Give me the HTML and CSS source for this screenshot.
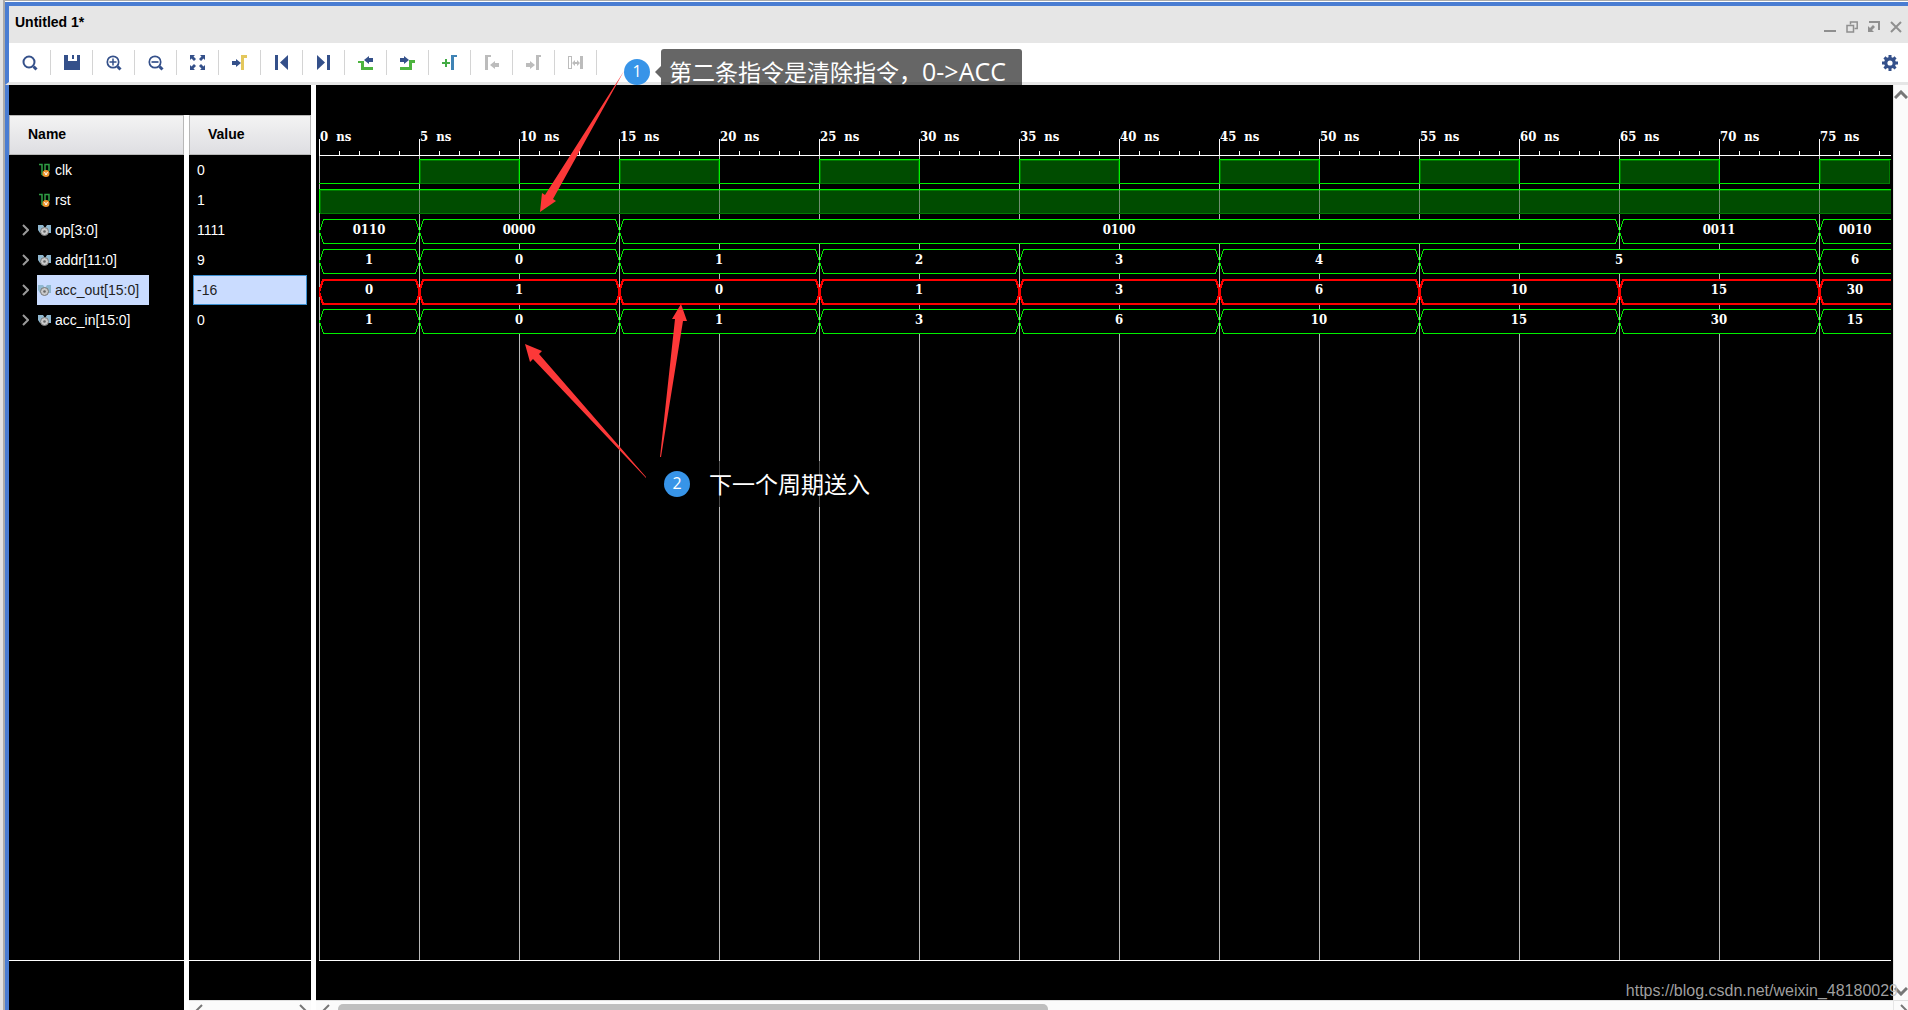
FILE: index.html
```html
<!DOCTYPE html>
<html lang="zh-CN">
<head>
<meta charset="utf-8">
<title>Untitled 1*</title>
<link rel="stylesheet" href="styles.css">
</head>
<body>
<div class="window">
  <header class="titlebar">
    <h1 class="title">Untitled 1*</h1>
    <div class="window-controls">
      <button type="button" class="ctl" aria-label="Minimize"><svg width="12" height="12"><path d="M0 9h12v2H0z" fill="#8f8f8f"/></svg></button>
      <button type="button" class="ctl" aria-label="Restore"><svg width="12" height="12" fill="none" stroke="#8f8f8f" stroke-width="1.5"><path d="M4.5 3.5V1h6.7v6.5H8.5"/><path d="M1 4.5h6.500v6.500H1z"/></svg></button>
      <button type="button" class="ctl" aria-label="Float"><svg width="12" height="12"><path d="M1 0h11v9h-2V2H1z" fill="#8f8f8f"/><path d="M0 11V5l2 2 3-3 2 2-3 3 2 2z" fill="#8f8f8f"/></svg></button>
      <button type="button" class="ctl" aria-label="Close"><svg width="12" height="12" stroke="#8f8f8f" stroke-width="2"><path d="M1 1l10 10M11 1L1 11"/></svg></button>
    </div>
  </header>

  <div class="toolbar" role="toolbar" aria-label="Waveform">
    <button type="button" class="tool" aria-label="Find"><svg width="16" height="16" fill="none" stroke="#34508a"><circle cx="7" cy="7" r="5.500" stroke-width="2"/><path d="M11.500 11.500l3 3" stroke-width="3"/></svg></button>
    <button type="button" class="tool" aria-label="Save"><svg width="16" height="16"><path d="M0 0h4v6h9V0h3v15H0z" fill="#34508a"/><path d="M8 0h2v4H8z" fill="#34508a"/></svg></button>
    <button type="button" class="tool" aria-label="Zoom in"><svg width="16" height="16" fill="none" stroke="#34508a"><circle cx="7" cy="7" r="5.700" stroke-width="1.700"/><path d="M11.500 11.500l3 3" stroke-width="3"/><path d="M3.500 7h7M7 3.500v7" stroke-width="1.500"/></svg></button>
    <button type="button" class="tool" aria-label="Zoom out"><svg width="16" height="16" fill="none" stroke="#34508a"><circle cx="7" cy="7" r="5.700" stroke-width="1.700"/><path d="M11.500 11.500l3 3" stroke-width="3"/><path d="M3.500 7h7" stroke-width="1.700"/></svg></button>
    <button type="button" class="tool" aria-label="Zoom fit"><svg width="16" height="16" fill="#34508a"><path d="M0 0h5L3.500 1.500 6 4 4 6 1.500 3.500 0 5zM15 0v5l-1.500-1.500L11 6 9 4l2.500-2.500L10 0zM0 15v-5l1.500 1.500L4 9l2 2-2.500 2.500L5 15zM15 15h-5l1.500-1.500L9 11l2-2 2.500 2.500L15 10z"/></svg></button>
    <button type="button" class="tool" aria-label="Go to cursor"><svg width="16" height="16"><path d="M0 6h4V4l5 4-5 4v-2H0z" fill="#34508a"/><path d="M9 0h6v3h-3v12H9z" fill="#e3c75c"/></svg></button>
    <button type="button" class="tool" aria-label="Go to start"><svg width="16" height="16" fill="#34508a"><path d="M1 0h3v15H1zM14 0v15L6 7.500z"/></svg></button>
    <button type="button" class="tool" aria-label="Go to end"><svg width="16" height="16" fill="#34508a"><path d="M1 0v15l8-7.500zM11 0h3v15h-3z"/></svg></button>
    <button type="button" class="tool" aria-label="Previous transition"><svg width="16" height="16"><path d="M0 6h6v6h9v3H3V8H0z" fill="#4db43f"/><path d="M6 5l5-4v2h4v4h-4v2z" fill="#34508a"/></svg></button>
    <button type="button" class="tool" aria-label="Next transition"><svg width="16" height="16"><path d="M0 12h9V5h6v3h-3v7H0z" fill="#4db43f"/><path d="M0 3h4V1l5 4-5 4V7H0z" fill="#34508a"/></svg></button>
    <button type="button" class="tool" aria-label="Add marker"><svg width="16" height="16"><path d="M3 4h2v3h3v2H5v3H3V9H0V7h3z" fill="#43ab45"/><path d="M9 0h6v2h-3v13H9z" fill="#3f83b5"/></svg></button>
    <button type="button" class="tool" aria-label="Previous marker" disabled><svg width="16" height="16" fill="#bcbcbc"><path d="M1 0h6v2H4v13H1zM6 10l5-4v2h4v4h-4v2z"/></svg></button>
    <button type="button" class="tool" aria-label="Next marker" disabled><svg width="16" height="16" fill="#bcbcbc"><path d="M10 0h5v2h-2v13h-3zM0 8h4V6l5 4-5 4v-2H0z"/></svg></button>
    <button type="button" class="tool" aria-label="Swap cursors" disabled><svg width="16" height="16" fill="#bcbcbc"><path d="M0 1h4v13H0zM1 2v11h2V2z" fill-rule="evenodd"/><path d="M12 1h3v13h-3zM4 8l3-3v2h2V5l3 3-3 3V9H7v2z"/></svg></button>
    <button type="button" class="tool settings" aria-label="Settings"><svg width="16" height="16"><path d="M6.500 0h3v2.200l1.400.6 1.600-1.500 2.100 2.100-1.500 1.600.6 1.400H16v3h-2.300l-.6 1.400 1.500 1.600-2.100 2.100-1.600-1.500-1.400.6V16h-3v-2.400l-1.400-.6-1.600 1.500-2.100-2.100 1.500-1.600-.6-1.400H0v-3h2.300L2.900 5 1.400 3.400l2.100-2.100 1.600 1.500 1.400-.6z" fill="#34508a"/><circle cx="8" cy="8" r="2.600" fill="#fff"/></svg></button>
  </div>

  <main class="workspace">
    <div class="signals">
      <section class="pane names">
        <table class="list">
          <thead><tr><th scope="col">Name</th></tr></thead>
          <tbody>
            <tr><td><span class="signal leaf"><svg class="kind" width="14" height="14"><use href="#bit"/></svg><span>clk</span></span></td></tr>
            <tr><td><span class="signal leaf"><svg class="kind" width="14" height="14"><use href="#bit"/></svg><span>rst</span></span></td></tr>
            <tr><td><svg class="expand" width="7" height="12"><use href="#chev"/></svg><span class="signal"><svg class="kind" width="14" height="14"><use href="#bus"/></svg><span>op[3:0]</span></span></td></tr>
            <tr><td><svg class="expand" width="7" height="12"><use href="#chev"/></svg><span class="signal"><svg class="kind" width="14" height="14"><use href="#bus"/></svg><span>addr[11:0]</span></span></td></tr>
            <tr><td><svg class="expand" width="7" height="12"><use href="#chev"/></svg><span class="signal selected"><svg class="kind" width="14" height="14"><use href="#bus"/></svg><span>acc_out[15:0]</span></span></td></tr>
            <tr><td><svg class="expand" width="7" height="12"><use href="#chev"/></svg><span class="signal"><svg class="kind" width="14" height="14"><use href="#bus"/></svg><span>acc_in[15:0]</span></span></td></tr>
          </tbody>
        </table>
        <div class="rest"></div>
        <div class="foot"></div>
      </section>
      <section class="pane values">
        <table class="list">
          <thead><tr><th scope="col">Value</th></tr></thead>
          <tbody>
            <tr><td><span class="value">0</span></td></tr>
            <tr><td><span class="value">1</span></td></tr>
            <tr><td><span class="value">1111</span></td></tr>
            <tr><td><span class="value">9</span></td></tr>
            <tr><td><span class="value selected">-16</span></td></tr>
            <tr><td><span class="value">0</span></td></tr>
          </tbody>
        </table>
        <div class="rest"></div>
        <div class="foot"><div class="hscroll"><svg width="8" height="14"><use href="#left"/></svg><span class="track"></span><svg width="8" height="14"><use href="#right"/></svg></div></div>
      </section>
    </div>

    <section class="pane waves" aria-label="Waveforms">
      <svg class="plot">
        <defs>
          <pattern id="grid" width="100" height="4000" patternUnits="userSpaceOnUse"><path d="M0 0h1v4000H0z" fill="#b8b8b8"/></pattern>
          <pattern id="ticks" width="100" height="200" patternUnits="userSpaceOnUse"><path d="M0 54h1v16H0zM20 66h1v4h-1zM40 66h1v4h-1zM60 66h1v4h-1zM80 66h1v4h-1z" fill="#fff"/></pattern>
          <g id="bit"><path d="M1 1.500h3V12M7 12V1.500h4V8M4 12h3" fill="none" stroke="#2f9e44" stroke-width="1.500"/><circle cx="8" cy="10.500" r="3.500" fill="#f0962e"/><path d="M6.500 9L8 12l1.500-3" fill="none" stroke="#fff"/></g>
          <g id="bus"><path d="M0 2h5l2 3 2-3h4v8H2L0 7z" fill="#8fb8d0"/><circle cx="6.500" cy="8.500" r="4" fill="#c9c9c9" stroke="#777"/><circle cx="6.500" cy="8.500" r="1.300" fill="#666"/></g>
          <path id="chev" d="M1 1l5 5-5 5" fill="none" stroke="#9a9a9a" stroke-width="2"/>
          <path id="left" d="M7 1L1 7l6 6" fill="none" stroke="#777" stroke-width="2"/>
          <path id="right" d="M1 1l6 6-6 6" fill="none" stroke="#777" stroke-width="2"/>
          <path id="up" d="M1 8l6-6 6 6" fill="none" stroke="#777" stroke-width="3"/>
          <path id="down" d="M1 1l6 6 6-6" fill="none" stroke="#777" stroke-width="3"/>
        </defs>

        <rect y="71" width="100%" height="100%" fill="url(#grid)"/>
        <rect width="100%" height="70" fill="url(#ticks)"/>
        <rect y="70" width="100%" height="1" fill="#fff"/>

        <g class="scale">
          <text x="1" y="56">0<tspan dx="4"> ns</tspan></text>
          <text x="101" y="56">5<tspan dx="4"> ns</tspan></text>
          <text x="201" y="56">10<tspan dx="4"> ns</tspan></text>
          <text x="301" y="56">15<tspan dx="4"> ns</tspan></text>
          <text x="401" y="56">20<tspan dx="4"> ns</tspan></text>
          <text x="501" y="56">25<tspan dx="4"> ns</tspan></text>
          <text x="601" y="56">30<tspan dx="4"> ns</tspan></text>
          <text x="701" y="56">35<tspan dx="4"> ns</tspan></text>
          <text x="801" y="56">40<tspan dx="4"> ns</tspan></text>
          <text x="901" y="56">45<tspan dx="4"> ns</tspan></text>
          <text x="1001" y="56">50<tspan dx="4"> ns</tspan></text>
          <text x="1101" y="56">55<tspan dx="4"> ns</tspan></text>
          <text x="1201" y="56">60<tspan dx="4"> ns</tspan></text>
          <text x="1301" y="56">65<tspan dx="4"> ns</tspan></text>
          <text x="1401" y="56">70<tspan dx="4"> ns</tspan></text>
          <text x="1501" y="56">75<tspan dx="4"> ns</tspan></text>
        </g>

        <!-- clk -->
        <path class="high" d="M101.500 75.500h98v23h-98zM301.500 75.500h98v23h-98zM501.500 75.500h98v23h-98zM701.500 75.500h98v23h-98zM901.500 75.500h98v23h-98zM1101.500 75.500h98v23h-98zM1301.500 75.500h98v23h-98zM1501.500 75.500h69v23h-69z"/>
        <path class="edge" d="M0 98.500H100.500V74.500h100v24M200.500 98.500h100v-24h100v24M400.500 98.500h100v-24h100v24M600.500 98.500h100v-24h100v24M800.500 98.500h100v-24h100v24M1000.500 98.500h100v-24h100v24M1200.500 98.500h100v-24h100v24M1400.500 98.500h100v-24h400"/>

        <!-- rst -->
        <rect class="high" x="1" y="105" width="100%" height="23"/>
        <rect y="105" width="100%" height="23" fill="url(#grid)" opacity=".6"/>
        <path class="edge" d="M0 104.500h4000M0 104v24"/>

        <!-- op, addr, acc_out, acc_in -->
        <path class="bus" d="M.5 146.500l4-12h92l4 12-4 12h-92zM100.500 146.500l4-12h192l4 12-4 12h-192zM300.500 146.500l4-12h992l4 12-4 12h-992zM1300.500 146.500l4-12h192l4 12-4 12h-192zM1500.500 146.500l4-12h400v24h-400z"/>
        <path class="bus" d="M.5 176.500l4-12h92l4 12-4 12h-92zM100.500 176.500l4-12h192l4 12-4 12h-192zM300.500 176.500l4-12h192l4 12-4 12h-192zM500.500 176.500l4-12h192l4 12-4 12h-192zM700.500 176.500l4-12h192l4 12-4 12h-192zM900.500 176.500l4-12h192l4 12-4 12h-192zM1100.500 176.500l4-12h392l4 12-4 12h-392zM1500.500 176.500l4-12h400v24h-400z"/>
        <path class="bus active" d="M0 207l4-12h93l4 12-4 12H4zM100 207l4-12h193l4 12-4 12H104zM300 207l4-12h193l4 12-4 12H304zM500 207l4-12h193l4 12-4 12H504zM700 207l4-12h193l4 12-4 12H704zM900 207l4-12h193l4 12-4 12H904zM1100 207l4-12h193l4 12-4 12h-193zM1300 207l4-12h193l4 12-4 12h-193zM1500 207l4-12h400v24h-400z"/>
        <path class="bus" d="M.5 236.500l4-12h92l4 12-4 12h-92zM100.500 236.500l4-12h192l4 12-4 12h-192zM300.500 236.500l4-12h192l4 12-4 12h-192zM500.500 236.500l4-12h192l4 12-4 12h-192zM700.500 236.500l4-12h192l4 12-4 12h-192zM900.500 236.500l4-12h192l4 12-4 12h-192zM1100.500 236.500l4-12h192l4 12-4 12h-192zM1300.500 236.500l4-12h192l4 12-4 12h-192zM1500.500 236.500l4-12h400v24h-400z"/>

        <g class="data">
          <text x="50" y="149">0110</text><text x="200" y="149">0000</text><text x="800" y="149">0100</text><text x="1400" y="149">0011</text><text x="1536" y="149">0010</text>
          <text x="50" y="179">1</text><text x="200" y="179">0</text><text x="400" y="179">1</text><text x="600" y="179">2</text><text x="800" y="179">3</text><text x="1000" y="179">4</text><text x="1300" y="179">5</text><text x="1536" y="179">6</text>
          <text x="50" y="209">0</text><text x="200" y="209">1</text><text x="400" y="209">0</text><text x="600" y="209">1</text><text x="800" y="209">3</text><text x="1000" y="209">6</text><text x="1200" y="209">10</text><text x="1400" y="209">15</text><text x="1536" y="209">30</text>
          <text x="50" y="239">1</text><text x="200" y="239">0</text><text x="400" y="239">1</text><text x="600" y="239">3</text><text x="800" y="239">6</text><text x="1000" y="239">10</text><text x="1200" y="239">15</text><text x="1400" y="239">30</text><text x="1536" y="239">15</text>
        </g>
      </svg>
      <div class="foot"><div class="hscroll"><svg width="8" height="14"><use href="#left"/></svg><span class="track"><span class="thumb"></span></span></div></div>
    </section>
    <div class="vscroll">
      <svg width="14" height="9"><use href="#up"/></svg>
      <svg class="down" width="14" height="9"><use href="#down"/></svg>
      <div class="corner"><svg width="8" height="14"><use href="#right"/></svg></div>
    </div>
  </main>
</div>

<svg class="arrows" aria-hidden="true">
  <path d="M624 71L545 195l-3-2-2 19 16-11-3-2z"/>
  <path d="M646 478L533 359l-3 3-5-18 17 7-3 3 107 123z"/>
  <path d="M660 457l15-138h-3l9-15 6 17h-4l-22 136z"/>
</svg>
<div class="note first"><span class="badge">1</span><p class="callout pointed">第二条指令是清除指令，<span class="latin">0-&gt;ACC</span></p></div>
<div class="note second"><span class="badge">2</span><p class="callout">下一个周期送入</p></div>
<a class="watermark" href="#">https://blog.csdn.net/weixin_48180029</a>
</body>
</html>
```

FILE: styles.css
```css
* { box-sizing: border-box; }

body {
  margin: 0;
  height: 100vh;
  overflow: hidden;
  position: relative;
  background: #fff;
  color: #000;
  font: 14px/20px "Liberation Sans", Arial, sans-serif;
}

button {
  display: flex;
  align-items: center;
  justify-content: center;
  margin: 0;
  padding: 0;
  border: 0;
  background: none;
}

svg { display: block; flex: none; }

.window {
  display: flex;
  flex-direction: column;
  height: 100%;
  margin-left: 3px;
  border-top: 1px solid #aaa;
  border-left: 2px solid #aaa;
  box-shadow: -3px 0 0 #e2e2e2;
}

.titlebar {
  display: flex;
  align-items: center;
  justify-content: space-between;
  height: 41px;
  padding: 0 6px 5px 6px;
  margin-top: 1px;
  flex: none;
  border-top: 4px solid #4a7dd2;
  border-left: 4px solid #4a7dd2;
  background: #e6e6e6;
}

.title { margin: 0; font-size: 14px; line-height: 20px; }

.window-controls { display: flex; gap: 10px; padding-top: 10px; }

.toolbar {
  display: flex;
  align-items: center;
  height: 42px;
  flex: none;
  border-left: 4px solid #4a7dd2;
  border-bottom: 3px solid #e6e6e6;
  background: #fff;
}

.tool { width: 42px; height: 25px; border-right: 1px solid #d4d4d4; }
.settings { width: 16px; margin-left: auto; margin-right: 10px; border: 0; }

.workspace {
  display: flex;
  flex: 1;
  min-height: 0;
  border-left: 4px solid #4a7dd2;
}

.signals {
  display: flex;
  gap: 5px;
  width: 302px;
  flex: none;
  margin-right: 5px;
  border-top: 30px solid #000;
}

.pane { display: flex; flex-direction: column; background: #000; }
.names { width: 175px; }
.values { flex: 1; }
.waves { flex: 1; min-width: 0; }

.list { width: 100%; border-collapse: separate; border-spacing: 0; color: #fff; }
.list th {
  height: 40px;
  padding: 0 18px 2px;
  border: 1px solid #b8b8b8;
  background: linear-gradient(#f3f3f3, #dedee2);
  color: #000;
  text-align: left;
}
.list td { height: 30px; padding: 0; }
.names td { display: flex; align-items: center; padding-left: 13px; }

.signal {
  display: flex;
  align-items: center;
  gap: 3px;
  height: 30px;
  margin-left: 8px;
  padding: 0 10px 0 1px;
}
.leaf { margin-left: 15px; }

.value { display: block; height: 30px; margin: 0 4px; padding: 0 4px; line-height: 30px; }

.signal.selected { background: #cadcff; color: #222; }
.value.selected { border: 1px solid #3c8fd0; padding: 0 3px; line-height: 28px; background: #cadcff; color: #222; }

.rest { flex: 1; border-bottom: 1px solid #fff; }
.foot { height: 49px; flex: none; display: flex; flex-direction: column; justify-content: flex-end; }

.hscroll {
  display: flex;
  gap: 8px;
  height: 10px;
  padding: 3px 4px 0 6px;
  overflow: hidden;
  border-top: 1px solid #e0e0e0;
  background: #fbfbfb;
}
.track { flex: 1; }
.thumb { display: block; width: 46%; height: 14px; border-radius: 5px; background: #bfbfbf; }
.waves .hscroll { padding-right: 12px; }

.plot {
  flex: 1;
  width: auto;
  min-height: 0;
  margin: 0 2px 0 3px;
  border-bottom: 1px solid #fff;
  overflow: hidden;
  shape-rendering: crispEdges;
}
.scale, .data {
  fill: #fff;
  font: bold 13px "DejaVu Serif Condensed", "DejaVu Serif", serif;
}
.data { text-anchor: middle; }
.high { fill: #004c00; stroke: #007c00; }
.edge { fill: none; stroke: #00f000; }
.bus { fill: #000; stroke: #00f000; }
.active { stroke: #f00; stroke-width: 2px; }

.vscroll {
  display: flex;
  flex-direction: column;
  align-items: flex-end;
  width: 15px;
  padding-top: 5px;
  border-left: 1px solid #e6e6e6;
  background: #fbfbfb;
  overflow: hidden;
}
.down { margin-top: auto; margin-bottom: 4px; }
.corner {
  align-self: stretch;
  height: 10px;
  flex: none;
  padding: 3px 0 0 6px;
  overflow: hidden;
  border-top: 1px solid #e0e0e0;
}

.arrows { position: absolute; left: 0; top: 0; width: 100%; height: 100%; fill: #fc3838; pointer-events: none; }

.note { position: absolute; display: flex; align-items: center; }
.first { left: 624px; top: 49px; gap: 11px; }
.second { left: 664px; top: 461px; gap: 11px; }

.badge {
  width: 26px;
  height: 26px;
  border-radius: 50%;
  background: #3794e8;
  color: #fff;
  font: 16px/24px "Open Sans", "Noto Sans", sans-serif;
  text-align: center;
}

.callout {
  position: relative;
  margin: 0;
  height: 46px;
  padding: 0 16px 0 8px;
  border-radius: 3px;
  background: rgba(0, 0, 0, .6);
  color: #fff;
  font: 23px/46px "Open Sans", "Noto Sans CJK SC", sans-serif;
  white-space: nowrap;
}
.latin { font-size: 25px; line-height: 20px; }
.pointed::before {
  content: "";
  position: absolute;
  left: -6px;
  top: 17px;
  border: solid transparent;
  border-width: 6px 6px 6px 0;
  border-right-color: rgba(0, 0, 0, .6);
}

.watermark {
  position: absolute;
  right: 10px;
  bottom: 9px;
  color: rgba(190, 190, 190, .85);
  font-size: 16px;
  line-height: 20px;
  text-decoration: none;
}
```
